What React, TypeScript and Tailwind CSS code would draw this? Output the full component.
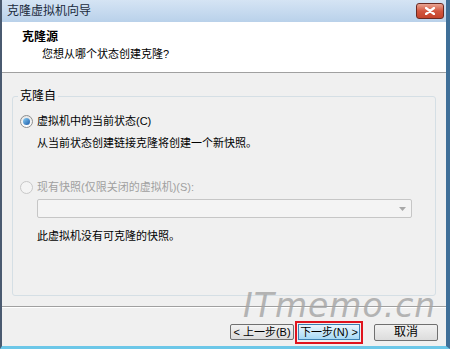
import React from "react";

const font = {
  fontFamily: '"Liberation Sans", "Noto Sans CJK SC", sans-serif',
};

function Radio({ checked, disabled }: { checked?: boolean; disabled?: boolean }) {
  return (
    <span
      className={
        "flex h-[13px] w-[13px] shrink-0 items-center justify-center rounded-full border " +
        (disabled ? "border-[#c8c8c8] bg-[#f4f4f4]" : "border-[#8e8f8f] bg-gradient-to-b from-[#e6e6e6] to-[#ffffff]")
      }
    >
      {checked && <span className="h-[7px] w-[7px] rounded-full bg-gradient-to-br from-[#8ad0f5] to-[#1a5aa8]" />}
    </span>
  );
}

export default function App() {
  return (
    <div className="relative h-[349px] w-[450px] overflow-hidden bg-[#f0f0f0] text-[11px] text-black" style={font}>
      <div className="flex h-full flex-col border-l-2 border-r-4 border-b-[3px] border-l-[#4a5a70] border-r-[#3f6f98] border-b-[#6cc7e8]">
        {/* title bar */}
        <div className="flex h-[22px] shrink-0 items-center justify-between bg-gradient-to-b from-[#d5e4f4] to-[#b9d1ea] pl-[5px] pr-[2px]">
          <span className="text-[12px] text-[#1b2a3c]">克隆虚拟机向导</span>
          <div className="flex h-[16px] w-[28px] items-center justify-center rounded-[3px] border border-[#6b2a22] bg-gradient-to-b from-[#e8a493] via-[#d2563f] to-[#c4442c]">
            <svg width="10" height="8" viewBox="0 0 10 8">
              <path d="M1 1 L9 7 M9 1 L1 7" stroke="#fff" strokeWidth="2.2" strokeLinecap="round" />
            </svg>
          </div>
        </div>
        {/* header */}
        <div className="flex h-[51px] shrink-0 flex-col border-b border-b-[#a0a0a0] bg-white pl-[20px] pt-[7px]">
          <span className="text-[12px] font-bold leading-[17px]">克隆源</span>
          <span className="pl-[20px] leading-[16px]">您想从哪个状态创建克隆?</span>
        </div>
        {/* body */}
        <div className="flex flex-1 flex-col pt-[23px]">
          <div className="relative ml-[10px] mr-[10px] h-[200px] shrink-0 rounded-[3px] border border-[#d5dfe5] px-[7px] pt-[16px]">
            <span className="absolute left-[5px] top-[-9px] bg-[#f0f0f0] px-[2px] text-[12px] leading-[16px]">克隆自</span>
            <div className="flex items-center gap-[4px]">
              <Radio checked />
              <span className="leading-[16px]">虚拟机中的当前状态(C)</span>
            </div>
            <div className="pl-[17px] pt-[6px] leading-[16px]">从当前状态创建链接克隆将创建一个新快照。</div>
            <div className="flex items-center gap-[4px] pt-[28px] text-[#a0a0a0]">
              <Radio disabled />
              <span className="leading-[16px]">现有快照(仅限关闭的虚拟机)(S):</span>
            </div>
            <div className="ml-[17px] mt-[4px] flex h-[19px] w-[375px] items-center justify-end rounded-[2px] border border-[#c6c6c6] bg-[#f4f4f4] pr-[5px]">
              <svg width="7" height="4" viewBox="0 0 7 4">
                <path d="M0 0 L7 0 L3.5 4 Z" fill="#a8a8a8" />
              </svg>
            </div>
            <div className="pl-[17px] pt-[10px] leading-[16px]">此虚拟机没有可克隆的快照。</div>
          </div>
          <div className="mt-[10px] shrink-0 border-t border-b border-t-[#a0a0a0] border-b-white" />
          <div className="flex items-center justify-end pr-[8px] pt-[13px]">
            <button className="h-[16px] w-[64px] whitespace-nowrap rounded-[2px] border border-[#707070] bg-gradient-to-b from-[#f2f2f2] to-[#dcdcdc] p-0 text-[11px] leading-[14px]">
              &lt; 上一步(B)
            </button>
            <div className="ml-[1px] border-[2px] border-[#e0141e] p-[1px]">
              <button className="h-[16px] w-[62px] whitespace-nowrap border border-[#3c7fb1] bg-gradient-to-b from-[#eaf6fd] to-[#a7d9f5] p-0 text-[11px] leading-[14px]">
                下一步(N) &gt;
              </button>
            </div>
            <button className="ml-[11px] h-[17px] w-[64px] whitespace-nowrap rounded-[2px] border border-[#707070] bg-gradient-to-b from-[#f2f2f2] to-[#dcdcdc] p-0 text-[12px] leading-[14px]">
              取消
            </button>
          </div>
        </div>
      </div>
      {/* watermark */}
      <div
        className="absolute left-[243px] top-[289px] text-[33px] italic leading-[34px] tracking-[1px] text-[#a4a4a4] opacity-80"
        style={{ fontFamily: '"DejaVu Sans", "Liberation Sans", sans-serif' }}
      >
        ITmemo.cn
      </div>
    </div>
  );
}
